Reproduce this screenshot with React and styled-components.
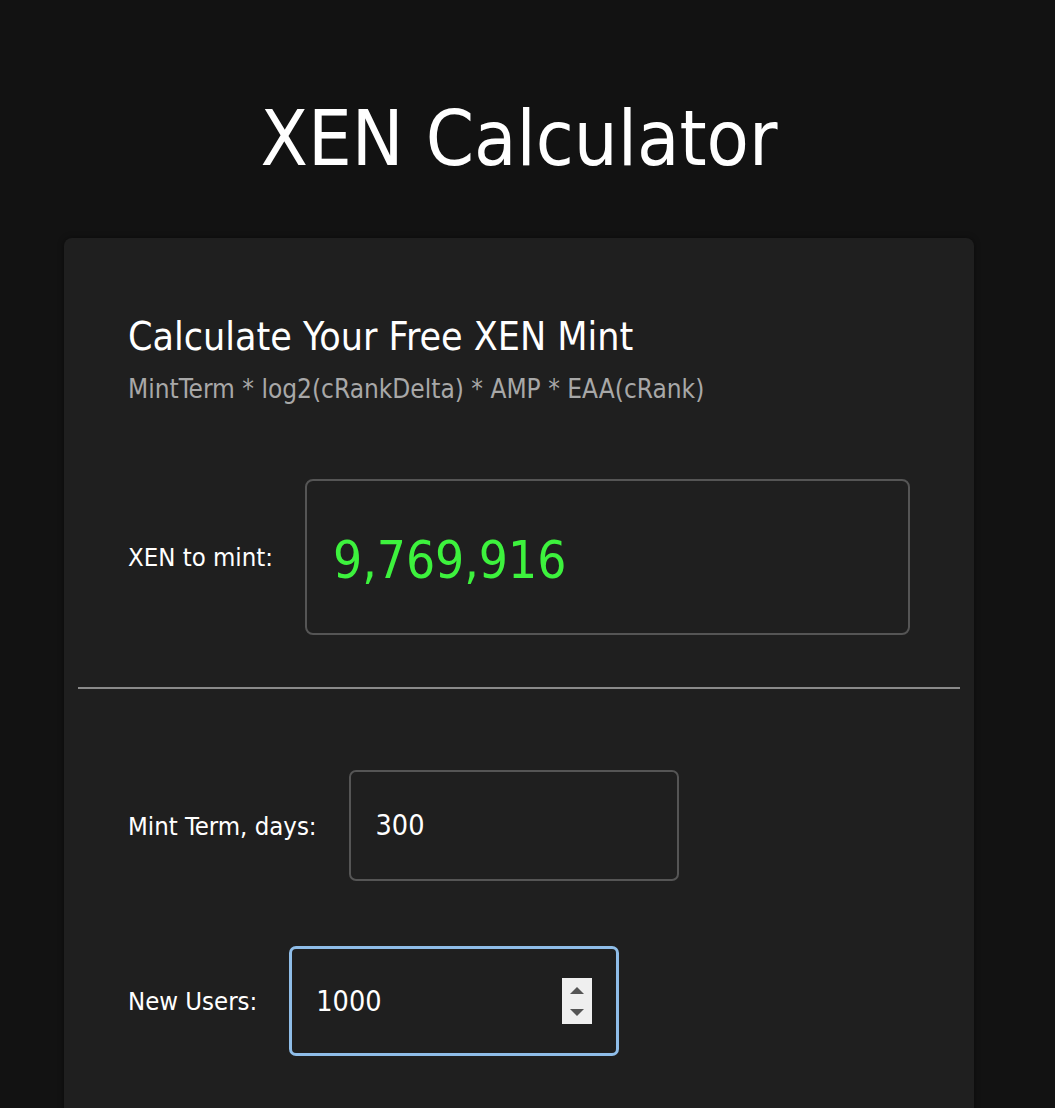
import React from "react";
import styled, { createGlobalStyle } from "styled-components";

const GlobalStyle = createGlobalStyle`
    html, body {
        margin: 0;
        padding: 0;
        background-color: #121212;
    }
    body {
        font-family: "DejaVu Sans Condensed", "DejaVu Sans", "Liberation Sans", sans-serif;
        color: #ffffff;
    }
`;

const Page = styled.div`
    width: 1038px;
    display: flex;
    flex-direction: column;
    align-items: center;
    padding-top: 84px;
`;

const Title = styled.h1`
    margin: 0;
    font-size: 77px;
    font-weight: 400;
    line-height: 110px;
    color: #ffffff;
`;

const Card = styled.div`
    width: 910px;
    margin-top: 44px;
    background-color: #1f1f1f;
    border-radius: 8px;
    padding: 76px 0 90px;
    box-shadow: rgba(0, 0, 0, 0.4) 0 0 6px;
`;

const Section = styled.div`
    padding: 0 64px;
    display: flex;
    flex-direction: column;
`;

const CardTitle = styled.h2`
    margin: 0;
    font-size: 39px;
    font-weight: 400;
    line-height: 46px;
`;

const Formula = styled.div`
    margin-top: 13px;
    font-size: 26px;
    line-height: 32px;
    color: #a8a8a8;
`;

const Row = styled.div`
    display: flex;
    flex-direction: row;
    align-items: center;
    gap: 32px;
    margin-top: ${({ top }) => top}px;
`;

const Label = styled.div`
    font-size: 25.5px;
    color: #ffffff;
    white-space: nowrap;
`;

const OutputBox = styled.div`
    width: 606px;
    height: 156px;
    box-sizing: border-box;
    border: 2px solid #555555;
    border-radius: 8px;
    display: flex;
    align-items: center;
    padding-left: 26px;
`;

const Amount = styled.div`
    font-size: 51px;
    color: #3df23d;
    margin-top: 6px;
`;

const Divider = styled.hr`
    margin: 52px 14px 0;
    border: none;
    border-top: 2px solid #8a8a8a;
`;

const InputBox = styled.div`
    width: 330px;
    height: ${({ focused }) => (focused ? 110 : 111)}px;
    box-sizing: border-box;
    border: ${({ focused }) => (focused ? "3px solid #8fbde8" : "2px solid #555555")};
    border-radius: 7px;
    display: flex;
    align-items: center;
    padding: 0 24px 0 ${({ focused }) => (focused ? 24 : 25)}px;
`;

const Field = styled.input`
    flex: 1;
    min-width: 0;
    background: transparent;
    border: none;
    outline: none;
    color: #ffffff;
    font-family: inherit;
    font-size: 28.5px;
    padding: 0;
`;

const Spinner = styled.div`
    width: 30px;
    height: 46px;
    background-color: #efefef;
    display: flex;
    flex-direction: column;
    align-items: center;
    justify-content: center;
    gap: 15px;
`;

const Arrow = styled.div`
    width: 0;
    height: 0;
    border-left: 7px solid transparent;
    border-right: 7px solid transparent;
    ${({ up }) => (up ? "border-bottom: 7px solid #555;" : "border-top: 7px solid #555;")}
`;

export default function App() {
    return (
        <>
            <GlobalStyle />
            <Page>
                <Title>XEN Calculator</Title>
                <Card>
                    <Section>
                        <CardTitle>Calculate Your Free XEN Mint</CardTitle>
                        <Formula>MintTerm * log2(cRankDelta) * AMP * EAA(cRank)</Formula>
                        <Row top={74}>
                            <Label>XEN to mint:</Label>
                            <OutputBox>
                                <Amount>9,769,916</Amount>
                            </OutputBox>
                        </Row>
                    </Section>
                    <Divider />
                    <Section>
                        <Row top={81}>
                            <Label>Mint Term, days:</Label>
                            <InputBox>
                                <Field type="text" defaultValue="300" />
                            </InputBox>
                        </Row>
                        <Row top={65}>
                            <Label>New Users:</Label>
                            <InputBox focused>
                                <Field type="text" defaultValue="1000" />
                                <Spinner>
                                    <Arrow up />
                                    <Arrow />
                                </Spinner>
                            </InputBox>
                        </Row>
                    </Section>
                </Card>
            </Page>
        </>
    );
}
